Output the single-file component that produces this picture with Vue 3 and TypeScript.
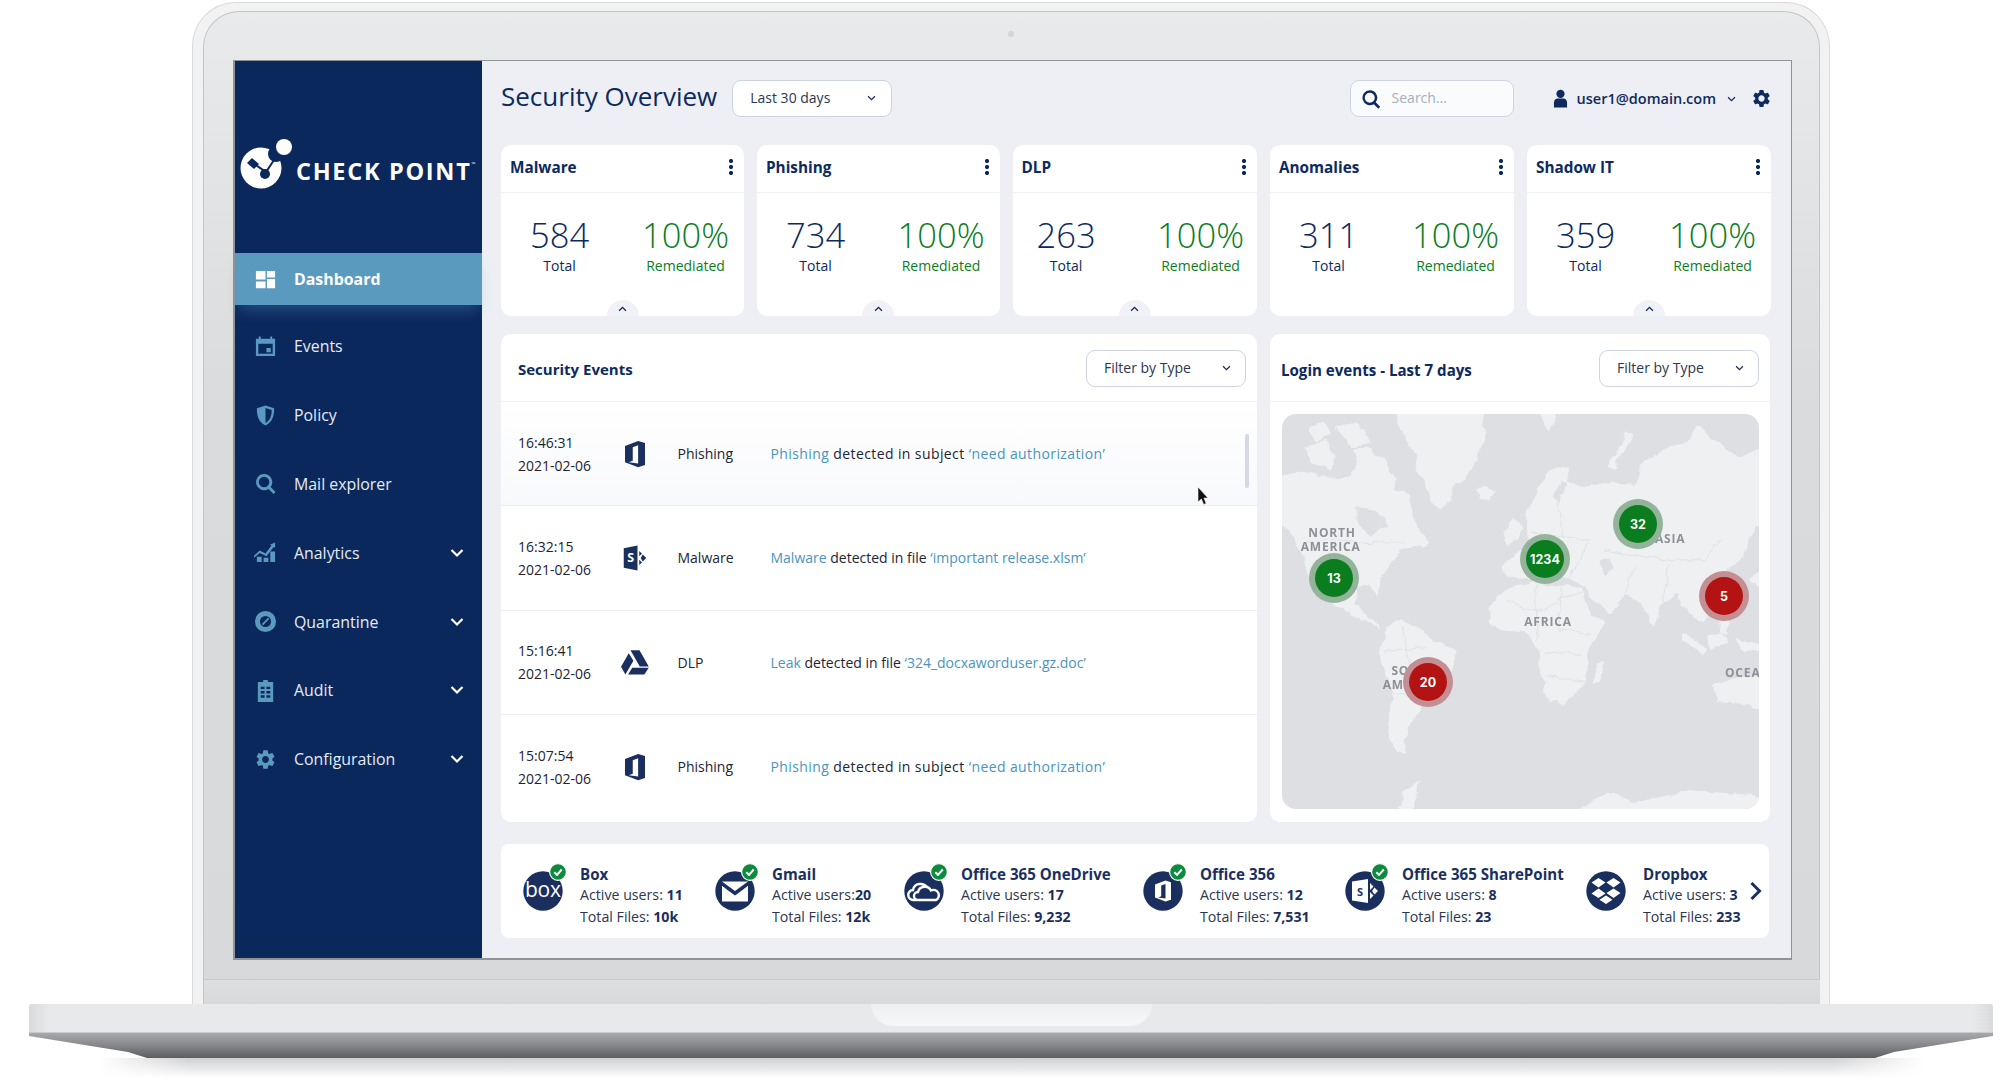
<script setup lang="ts">
interface NavItem {
  label: string
  icon: string
  caret?: boolean
  active?: boolean
}

const gear =
  'M19.14 12.94c.04-.3.06-.61.06-.94 0-.32-.02-.64-.07-.94l2.03-1.58a.49.49 0 0 0 .12-.61l-1.92-3.32a.488.488 0 0 0-.59-.22l-2.39.96c-.5-.38-1.03-.7-1.62-.94l-.36-2.54a.484.484 0 0 0-.48-.41h-3.84c-.24 0-.43.17-.47.41l-.36 2.54c-.59.24-1.13.57-1.62.94l-2.39-.96c-.22-.08-.47 0-.59.22L2.74 8.87c-.12.21-.08.47.12.61l2.03 1.58c-.05.3-.09.63-.09.94s.02.64.07.94l-2.03 1.58a.49.49 0 0 0-.12.61l1.92 3.32c.12.22.37.29.59.22l2.39-.96c.5.38 1.03.7 1.62.94l.36 2.54c.05.24.24.41.48.41h3.84c.24 0 .44-.17.47-.41l.36-2.54c.59-.24 1.13-.56 1.62-.94l2.39.96c.22.08.47 0 .59-.22l1.92-3.32c.12-.22.07-.47-.12-.61l-2.01-1.58zM12 15.6c-1.98 0-3.6-1.62-3.6-3.6s1.62-3.6 3.6-3.6 3.6 1.62 3.6 3.6-1.62 3.6-3.6 3.6z'
const office = 'M14.5 1.5 4 5.5v13l10.5 4 5.5-1.7V3.2zM14.5 5v14.6L7 18.6l3.2-1.3V6.6z'
const sharepoint =
  'M3 4.2 14 2v20L3 19.8zM15.4 6.4l2.2 2.1-2.2 2.1zM15.4 13.4l2.2 2.1-2.2 2.1zM18.2 9.2l2.8 2.8-2.8 2.8-1.6-2.8z'
const drive = 'M8.4 2.5h7.2L23 15.5h-7.2zM7 5 .8 15.8l3.5 6.1 6.4-10.9zM9.8 16.5H23l-3.5 5.4H6.4z'

const nav: NavItem[] = [
  { label: 'Dashboard', active: true, icon: 'M2 3h10v9H2zM13.5 3H22v7h-8.5zM2 14h10v7H2zM13.5 11.5H22V21h-8.5z' },
  { label: 'Events', icon: 'M5 1.5h2V4h10V1.5h2V4h3v18H2V4h3zM4.5 9v10.5h15V9zM13 13.5h4.5V18H13z' },
  { label: 'Policy', icon: 'M12 1.5 21 4.5c0 8-1.5 14-9 18-7.5-4-9-10-9-18zM12 4.3v15.6c5-3 6.4-7.5 6.5-13.6z' },
  { label: 'Mail explorer', icon: 'M10.5 2a8.5 8.5 0 0 1 6.8 13.6l5.2 5.2-2.1 2.1-5.2-5.2A8.5 8.5 0 1 1 10.5 2zm0 3a5.5 5.5 0 1 0 0 11 5.5 5.5 0 0 0 0-11z' },
  { label: 'Analytics', caret: true, icon: 'M0 15.5 6 10l6 3 6.2-8.2-1.6-.8L22 1.5V7l-1.5-.8-7.5 9.6-7-3.4-6 5.1zM3 16.5h5V22H3zM10 17.5h5V22h-5zM17 11h5v11h-5z' },
  { label: 'Quarantine', caret: true, icon: 'M12 1a11 11 0 1 1 0 22 11 11 0 0 1 0-22zm0 5.2a5.8 5.8 0 1 0 0 11.6 5.8 5.8 0 0 0 0-11.6zM14.6 8l1.3 1.3-6.4 6.6-1.3-1.3z' },
  { label: 'Audit', caret: true, icon: 'M9.5 1h5v2H20v21H4V3h5.5zM7 8v2.5h4V8zM13 8v2.5h4V8zM7 12.5V15h4v-2.5zM13 12.5V15h4v-2.5zM7 17v2.5h4V17zM13 17v2.5h4V17z' },
  { label: 'Configuration', caret: true, icon: gear },
]

const cards = [
  { title: 'Malware', total: 584, bubble: true },
  { title: 'Phishing', total: 734, bubble: true },
  { title: 'DLP', total: 263, bubble: true },
  { title: 'Anomalies', total: 311, bubble: false },
  { title: 'Shadow IT', total: 359, bubble: true },
]

const events = [
  { time: '16:46:31', icon: office, type: 'Phishing', lead: 'Phishing', mid: ' detected in subject ', file: '‘need authorization’', wide: true },
  { time: '16:32:15', icon: sharepoint, type: 'Malware', lead: 'Malware', mid: ' detected in file ', file: '‘important release.xlsm’', wide: false },
  { time: '15:16:41', icon: drive, type: 'DLP', lead: 'Leak', mid: ' detected in file ', file: '‘324_docxaworduser.gz.doc’', wide: false },
  { time: '15:07:54', icon: office, type: 'Phishing', lead: 'Phishing', mid: ' detected in subject ', file: '‘need authorization’', wide: true },
]

const pins = [
  { n: '13', x: 52, y: 164, red: false },
  { n: '1234', x: 263, y: 145, red: false },
  { n: '32', x: 356, y: 110, red: false },
  { n: '5', x: 442, y: 182, red: true },
  { n: '20', x: 146, y: 268, red: true },
]

const apps = [
  { name: 'Box', users: ' 11', files: '10k', kind: 'box', ok: true },
  { name: 'Gmail', users: '20', files: '12k', kind: 'gmail', ok: true },
  { name: 'Office 365 OneDrive', users: ' 17', files: '9,232', kind: 'onedrive', ok: true },
  { name: 'Office 356', users: ' 12', files: '7,531', kind: 'office', ok: true },
  { name: 'Office 365 SharePoint', users: ' 8', files: '23', kind: 'sharepoint', ok: true },
  { name: 'Dropbox', users: ' 3', files: '233', kind: 'dropbox', ok: false },
]
</script>

<template>
  <div class="page">
    <div class="lid">
      <div class="lid-inner">
        <span class="camera"></span>
        <div class="screen">
          <aside class="sidebar">
            <div class="logo">
              <svg class="logo-mark" viewBox="0 0 60 56" width="60" height="56" aria-hidden="true">
                <circle cx="24" cy="34" r="20.5" fill="#fff" />
                <circle cx="39" cy="20" r="8" fill="#0a285c" />
                <circle cx="47" cy="13" r="8" fill="#fff" />
                <path d="M15 24l7 6-5 5-7-6z" fill="#0a285c" />
                <path d="M16 29l13 9 8-12" fill="none" stroke="#0a285c" stroke-width="2" />
                <circle cx="28" cy="40" r="5" fill="#0a285c" />
              </svg>
              <span class="logo-text">CHECK POINT<sup>™</sup></span>
            </div>
            <nav class="nav">
              <div v-for="item in nav" :key="item.label" class="nav-item" :class="{ active: item.active }">
                <svg class="nav-icon" viewBox="0 0 24 24" aria-hidden="true"><path :d="item.icon" fill-rule="evenodd" /></svg>
                <span class="nav-label">{{ item.label }}</span>
                <svg v-if="item.caret" class="nav-caret" viewBox="0 0 14 10" aria-hidden="true"><path d="M1.5 2 7 7.5 12.5 2" /></svg>
              </div>
            </nav>
          </aside>

          <main class="main">
            <header class="top">
              <h1 class="title">Security Overview</h1>
              <div class="select range">
                <span>Last 30 days</span>
                <svg class="caret" viewBox="0 0 10 7" aria-hidden="true"><path d="M1 1.5 5 5.5 9 1.5" /></svg>
              </div>
              <div class="search">
                <svg viewBox="0 0 24 24" width="20" height="20" aria-hidden="true"><path fill="#0d2a5e" fill-rule="evenodd" d="M10.5 1.5a9 9 0 0 1 7.1 14.5l5.4 5.4-2.2 2.2-5.4-5.4A9 9 0 1 1 10.5 1.5zm0 3a6 6 0 1 0 0 12 6 6 0 0 0 0-12z" /></svg>
                <span>Search...</span>
              </div>
              <div class="user">
                <svg viewBox="0 0 16 20" width="15" height="19" aria-hidden="true"><circle cx="8" cy="5" r="4.4" fill="#0d2a5e" /><path fill="#0d2a5e" d="M1 19.5v-5c0-3 2-4.6 4-4.6h6c2 0 4 1.6 4 4.6v5z" /></svg>
                <span class="user-name">user1@domain.com</span>
                <svg class="caret" viewBox="0 0 10 7" aria-hidden="true"><path d="M1 1.5 5 5.5 9 1.5" /></svg>
                <svg class="top-gear" viewBox="0 0 24 24" width="21" height="21" aria-hidden="true"><path :d="gear" fill="#0d2a5e" /></svg>
              </div>
            </header>

            <section class="cards">
              <article v-for="card in cards" :key="card.title" class="card">
                <div class="card-head">
                  <span>{{ card.title }}</span>
                  <i class="dots"></i>
                </div>
                <div class="card-body">
                  <div class="stat">
                    <b>{{ card.total }}</b>
                    <small>Total</small>
                  </div>
                  <div class="stat good">
                    <b>100%</b>
                    <small>Remediated</small>
                  </div>
                </div>
                <div v-if="card.bubble" class="bubble">
                  <svg viewBox="0 0 10 7" width="9" height="6" aria-hidden="true"><path d="M1 5.5 5 1.5 9 5.5" /></svg>
                </div>
              </article>
            </section>

            <section class="panels">
              <div class="panel events">
                <div class="panel-head">
                  <h2>Security Events</h2>
                  <div class="select filter">
                    <span>Filter by Type</span>
                    <svg class="caret" viewBox="0 0 10 7" aria-hidden="true"><path d="M1 1.5 5 5.5 9 1.5" /></svg>
                  </div>
                </div>
                <div v-for="(ev, i) in events" :key="ev.time" class="event" :class="{ first: i === 0 }">
                  <div class="when">{{ ev.time }}<br />2021-02-06</div>
                  <div class="event-icon">
                    <svg viewBox="0 0 24 24" width="30" height="30" aria-hidden="true"><path :d="ev.icon" fill="#1b2f5e" fill-rule="evenodd" /><text v-if="ev.type === 'Malware'" x="8.5" y="15.5" font-size="10" font-weight="700" fill="#fff" text-anchor="middle" font-family="Open Sans">S</text></svg>
                  </div>
                  <div class="event-type">{{ ev.type }}</div>
                  <div class="event-msg" :class="{ wide: ev.wide }"><span class="link">{{ ev.lead }}</span>{{ ev.mid }}<span class="link">{{ ev.file }}</span></div>
                </div>
                <span class="scrollbar"></span>
                <svg class="cursor" viewBox="0 0 12 20" width="12" height="20" aria-hidden="true"><path d="M1 0v15l3.4-3 2.2 5.5 2.6-1-2.2-5.4H11z" fill="#111" stroke="#fff" stroke-width=".6" /></svg>
              </div>

              <div class="panel login">
                <div class="panel-head">
                  <h2>Login events - Last 7 days</h2>
                  <div class="select filter">
                    <span>Filter by Type</span>
                    <svg class="caret" viewBox="0 0 10 7" aria-hidden="true"><path d="M1 1.5 5 5.5 9 1.5" /></svg>
                  </div>
                </div>
                <div class="map">
                  <svg class="map-art" viewBox="36 43 1430 1184" aria-hidden="true">
                    <defs>
                      <filter id="rough" x="-5%" y="-5%" width="110%" height="110%">
                        <feTurbulence type="fractalNoise" baseFrequency="0.022" numOctaves="4" seed="7" />
                        <feDisplacementMap in="SourceGraphic" scale="26" xChannelSelector="R" yChannelSelector="G" />
                      </filter>
                    </defs>
                    <g filter="url(#rough)">
                      <g fill="#eff0f2" stroke="#eff0f2" stroke-width="4" stroke-linejoin="round">
                        <path d="M370 30H640L640 120 615 185 575 245 545 270 520 335 490 310 480 270 445 215 435 160 400 100z" />
                        <path d="M20 232 100 218 170 232 240 235 270 195 255 150 300 150 340 200 375 270 415 285 425 340 455 400 470 435 420 445 385 450 355 500 330 535 325 585 300 555 265 565 245 610 275 635 330 680 300 668 255 650 215 625 170 590 130 555 105 480 62 395 20 345z" />
                        <path d="M105 145l60-20 30 40-20 45-50-20zM120 90l40-20 20 30-40 25zM200 80l60-10 40 60-50 10zM290 165l50 10 35 70-30 15-30-40z" />
                        <path d="M620 270l30-8 22 15-18 20-30-5z" />
                        <path d="M1020 200l50-100 20 8-50 60-5 40z" />
                        <path d="M345 685 395 665 450 690 490 725 560 752 550 800 510 870 450 925 415 975 400 1060 365 1035 355 960 372 880 328 760z" />
                        <path d="M770 345 800 265 860 205 895 205 880 250 950 265 1020 250 1100 255 1115 190 1250 125 1280 80 1330 125 1400 170 1480 150V365L1435 410 1415 470 1370 505 1335 590 1300 665 1255 640 1220 580 1175 610 1150 680 1115 610 1065 585 1025 640 960 590 925 545 875 530 800 540 720 530 695 500 730 470 790 440 770 400z" />
                        <path d="M700 400l30-45 20 30-6 40-30 5z" />
                        <path d="M660 625 700 565 790 550 880 565 925 565 965 650 1000 670 950 760 945 840 885 905 835 905 815 830 810 750 770 695 690 690 660 660z" />
                        <path d="M975 800l22-12-10 55-15 10z" />
                        <path d="M1240 700l70 50-10 10-60-35zM1310 710l50-10 5 30-45 15zM1400 720l80 20v20l-74-15zM1440 540l40-30 0 60zM1350 650l25 5-5 45-15-10z" />
                        <path d="M1330 860 1390 832 1480 840V935L1430 910 1340 905z" />
                        <path d="M380 1240 405 1170 445 1148 420 1240zM910 1240 1020 1178 1100 1212 1250 1172 1480 1190V1240z" />
                        <path d="M805 30h55l-25 63z" />
                      </g>
                      <g fill="#dedfe3">
                        <path d="M262 322l60 10 30 45-50 30-40-45z" />
                        <path d="M850 290l20-50 12 10-12 60zM985 480l35-8 10 40-25 10z" />
                      </g>
                      <g fill="none" stroke="#dddee2" stroke-width="2.5">
                        <path d="M105 420 350 430 400 430M705 600 800 640 870 600 930 580M800 550 800 720M870 565 870 690 960 700M820 760 930 760M820 830 945 840M1000 450 1180 480 1300 480 1350 420M1065 585 1100 500M1175 610 1200 490M340 760 470 740M400 680 420 830 510 840M370 880 440 890M780 400 960 420 900 530M860 300 880 420" />
                      </g>
                    </g>
                    <g class="map-labels">
                      <text x="115" y="411">NORTH</text>
                      <text x="92" y="454">AMERICA</text>
                      <text x="762" y="678">AFRICA</text>
                      <text x="1154" y="431">ASIA</text>
                      <text x="364" y="824">SO</text>
                      <text x="338" y="867">AM</text>
                      <text x="1364" y="831">OCEA</text>
                    </g>
                  </svg>
                  <span
                    v-for="pin in pins"
                    :key="pin.n"
                    class="pin"
                    :class="{ red: pin.red }"
                    :style="{ left: pin.x + 'px', top: pin.y + 'px' }"
                  >{{ pin.n }}</span>
                </div>
              </div>
            </section>

            <section class="apps">
              <div v-for="app in apps" :key="app.name" class="app">
                <div class="app-icon">
                  <svg viewBox="0 0 40 40" width="40" height="40" aria-hidden="true">
                    <circle cx="20" cy="20" r="19.7" fill="#1b2f5e" />
                    <text v-if="app.kind === 'box'" x="20" y="26" font-size="21" fill="#fff" text-anchor="middle" font-family="Open Sans" textLength="36">box</text>
                    <g v-else-if="app.kind === 'gmail'">
                      <path d="M7 10.5h26v20H7z" fill="#fff" />
                      <path d="M7 10.5 20 20l13-9.5v4.5L20 24.5 7 15z" fill="#1b2f5e" />
                      <path d="M11 18v12H7V15zM29 18v12h4V15z" fill="#fff" />
                    </g>
                    <g v-else-if="app.kind === 'onedrive'" fill="none" stroke="#fff" stroke-width="2.4">
                      <path d="M13 29H9.5a5 5 0 0 1-.5-10 6.5 6.5 0 0 1 7-6 8 8 0 0 1 7 3" />
                      <path d="M14 29a4 4 0 0 1 0-8 7 7 0 0 1 13-1.5A5 5 0 0 1 32 29z" fill="#1b2f5e" />
                    </g>
                    <path v-else-if="app.kind === 'office'" transform="translate(8 8)" :d="office" fill="#fff" fill-rule="evenodd" />
                    <g v-else-if="app.kind === 'sharepoint'">
                      <path d="M7 10.5 23 8v24L7 29.5zM25 12l3.5 3.5L25 19zM25 21l3.5 3.5L25 28zM29.5 16.5l3.5 3.5-3.5 3.5-2.5-3.5z" fill="#fff" fill-rule="evenodd" />
                      <text x="15" y="24.5" font-size="11" font-weight="700" fill="#1b2f5e" text-anchor="middle" font-family="Open Sans">S</text>
                    </g>
                    <path v-else d="M12.5 7l7 4.5-7 5-7-5zM27.5 7l7 4.5-7 5-7-5zM12.5 17.5l7 5-7 4.5-7-4.5zM27.5 17.5l7 4.5-7 5-7-5zM20 24.5l6.5 4.2-6.5 4.3-6.5-4.3z" fill="#fff" />
                  </svg>
                  <svg v-if="app.ok" class="check" viewBox="0 0 18 18" width="18" height="18" aria-hidden="true">
                    <circle cx="9" cy="9" r="8.4" fill="#0e8a3e" stroke="#fff" stroke-width="1.2" />
                    <path d="M5.3 9.2 8 11.8 12.8 6.5" fill="none" stroke="#fff" stroke-width="2" />
                  </svg>
                </div>
                <div class="app-text">
                  <strong>{{ app.name }}</strong>
                  <span>Active users:<b>{{ app.users }}</b></span>
                  <span>Total Files: <b>{{ app.files }}</b></span>
                </div>
              </div>
              <svg class="apps-next" viewBox="0 0 12 20" width="13" height="20" aria-hidden="true"><path d="M2 2l8 8-8 8" /></svg>
            </section>
          </main>
        </div>
        <div class="chin"></div>
      </div>
    </div>
    <div class="base">
      <div class="base-top"><span class="notch"></span></div>
      <div class="base-edge"></div>
      <div class="base-shadow"></div>
    </div>
  </div>
</template>

<style>
html,
body {
  margin: 0;
  background: #fff;
  overflow: hidden;
}
</style>

<style scoped>
* {
  box-sizing: border-box;
}

.page {
  width: 2000px;
  height: 1080px;
  padding-top: 2px;
  font-family: 'Open Sans', 'Liberation Sans', sans-serif;
  color: #0d2a5e;
  overflow: hidden;
}

.lid {
  width: 1638px;
  height: 1002px;
  margin-left: 192px;
  padding: 8px 9px 0 10px;
  border: 1px solid #d9dadc;
  border-bottom: 0;
  border-radius: 44px 44px 0 0;
  background: #f2f2f3;
}

.lid-inner {
  position: relative;
  height: 100%;
  padding: 48px 0 0 29px;
  border: 1px solid #c3c4c7;
  border-bottom: 0;
  border-radius: 36px 36px 0 0;
  background: linear-gradient(#e9eaeb, #dadbdc 40%, #d8d9db);
}

.camera {
  position: absolute;
  top: 19px;
  left: 804px;
  width: 6px;
  height: 6px;
  border-radius: 50%;
  background: #d4d5d8;
}

.screen {
  display: flex;
  width: 1559px;
  height: 900px;
  border: 2px solid #8f9296;
  border-width: 1px 1px 2px 2px;
  background: #edeff5;
}

.chin {
  height: 25px;
  margin: 19px -1px 0 -29px;
  border-top: 1px solid #c8c9cb;
  background: linear-gradient(#dedfe1, #d8d9db);
}

.sidebar {
  flex: none;
  width: 247px;
  background: #0a285c;
}

.logo {
  display: flex;
  align-items: flex-end;
  height: 192px;
  padding: 0 0 49px 1px;
  color: #fff;
}

.logo-mark {
  flex: none;
  margin: 0 -1px 14px 1px;
}

.logo-text {
  margin-bottom: 19px;
  font-size: 23.5px;
  line-height: 28px;
  font-weight: 700;
  letter-spacing: 1.7px;
  white-space: nowrap;
}

.logo-text sup {
  font-size: 5px;
  font-weight: 400;
  vertical-align: 14px;
  line-height: 0;
}

.nav-item {
  display: flex;
  align-items: center;
  height: 68.8px;
  padding-left: 19px;
  color: #e6ebf3;
}

.nav-item.active {
  height: 52px;
  margin-bottom: 7px;
  color: #fff;
  background: #5b9abf;
  font-weight: 700;
  box-shadow: 0 10px 14px -4px rgba(91, 154, 191, 0.3);
}

.nav-icon {
  flex: none;
  width: 23px;
  height: 23px;
  fill: #5b9abf;
}

.active .nav-icon {
  fill: #fff;
}

.nav-label {
  margin-left: 17px;
  font-size: 15.9px;
}

.nav-caret {
  width: 14px;
  height: 10px;
  margin-left: auto;
  margin-right: 18px;
  fill: none;
  stroke: #fff;
  stroke-width: 2.2;
}

.main {
  flex: 1;
  min-width: 0;
  padding: 19px 19px 0;
}

.top {
  display: flex;
  align-items: center;
  height: 37px;
  margin-bottom: 28px;
}

.title {
  margin: 0 15px 4px 0;
  font-size: 26px;
  line-height: 37px;
  font-weight: 400;
  white-space: nowrap;
}

.select {
  display: flex;
  align-items: center;
  justify-content: space-between;
  height: 37px;
  padding-bottom: 2px;
  border: 1px solid #ccd3e2;
  border-radius: 9px;
  background: #fff;
  font-size: 14px;
  color: #2b3650;
}

.caret {
  flex: none;
  width: 9px;
  height: 6px;
  fill: none;
  stroke: #1d2f58;
  stroke-width: 1.5;
}

.range {
  width: 160px;
  padding-left: 17px;
  padding-right: 15px;
}

.search {
  display: flex;
  align-items: center;
  gap: 11px;
  width: 164px;
  height: 37px;
  margin-left: auto;
  padding-left: 10px;
  border: 1px solid #ccd3e2;
  border-radius: 9px;
  background: #fafbfd;
  color: #a7aebb;
  font-size: 14px;
}

.search span {
  margin-bottom: 2px;
}

.user {
  display: flex;
  align-items: center;
  margin-left: 39px;
}

.user-name {
  margin: 0 11px 0 9px;
  font-size: 14.5px;
  font-weight: 600;
  white-space: nowrap;
}

.top-gear {
  margin-left: 15px;
}

.cards {
  display: grid;
  grid-template-columns: 243px 242.5px 244.5px 244px 244px;
  gap: 13px;
  height: 171px;
  margin-bottom: 18px;
}

.card {
  position: relative;
  overflow: hidden;
  border-radius: 10px;
  background: #fff;
}

.card-head {
  display: flex;
  align-items: center;
  justify-content: space-between;
  height: 48px;
  padding: 0 11px 3px 9px;
  border-bottom: 1px solid #eff1f7;
  font-size: 15.3px;
  font-weight: 700;
}

.dots {
  width: 4px;
  height: 16px;
  background: radial-gradient(circle at 2px 2px, #0d2a5e 2px, transparent 2.2px) 0 0 / 4px 6px;
}

.card-body {
  display: flex;
  justify-content: space-between;
  padding: 24px 15px 0 29px;
}

.card:nth-child(3) .card-body {
  padding-left: 24px;
  padding-right: 13px;
}

.stat {
  display: flex;
  flex-direction: column;
  align-items: center;
}

.stat b {
  font-size: 34.5px;
  line-height: 36px;
  font-weight: 350;
}

.stat small {
  font-size: 14px;
  line-height: 26px;
}

.good {
  color: #0a7d1e;
}

.bubble {
  position: absolute;
  left: 50%;
  bottom: -16px;
  display: flex;
  justify-content: center;
  width: 32px;
  height: 32px;
  margin-left: -16px;
  padding-top: 6px;
  border-radius: 50%;
  background: #f0f2f7;
}

.bubble svg {
  fill: none;
  stroke: #0d2a5e;
  stroke-width: 1.5;
}

.panels {
  display: grid;
  grid-template-columns: 756px 500px;
  gap: 13px;
  height: 488px;
  margin-bottom: 22px;
}

.panel {
  position: relative;
  overflow: hidden;
  border-radius: 10px;
  background: #fff;
}

.panel-head {
  display: flex;
  align-items: center;
  justify-content: space-between;
  height: 68px;
  padding: 0 11px 0 17px;
  border-bottom: 1px solid #eff1f7;
}

.panel-head h2 {
  margin: 2px 0 0;
  font-size: 15px;
  font-weight: 700;
}

.filter {
  width: 160px;
  padding-left: 17px;
  padding-right: 14px;
  margin-top: 2px;
}

.login .panel-head {
  padding-left: 11px;
}

.login .panel-head h2 {
  margin-top: 4px;
  font-size: 15.1px;
}

.event {
  display: flex;
  align-items: center;
  height: 104.25px;
  padding-left: 17px;
  border-bottom: 1px solid #eceef3;
  font-size: 14px;
  color: #1d2433;
}

.event:last-of-type {
  border-bottom: 0;
}

.event.first {
  background: linear-gradient(#fff, #f8f9fc);
}

.when {
  width: 105.5px;
  line-height: 23px;
}

.event-icon {
  display: flex;
  width: 54px;
}

.event-icon svg {
  margin-left: -4px;
}

.event-type {
  width: 93px;
}

.wide {
  letter-spacing: 0.4px;
}

.link {
  color: #4a94bd;
}

.scrollbar {
  position: absolute;
  top: 100px;
  left: 744px;
  width: 4px;
  height: 54px;
  border-radius: 2px;
  background: #d5d9e6;
}

.cursor {
  position: absolute;
  top: 153px;
  left: 696px;
}

.map {
  position: relative;
  height: 395px;
  margin: 12px 11px 0 12px;
  overflow: hidden;
  border-radius: 14px;
  background: #dedfe3;
}

.map-art {
  display: block;
  width: 100%;
  height: 100%;
  filter: blur(0.4px);
}

.map-labels text {
  font-family: 'Open Sans', sans-serif;
  font-size: 36px;
  font-weight: 700;
  letter-spacing: 2.5px;
  fill: #8e9097;
}

.pin {
  position: absolute;
  display: flex;
  align-items: center;
  justify-content: center;
  width: 38px;
  height: 38px;
  margin: -19px 0 0 -19px;
  border-radius: 50%;
  background: #0a7d1e;
  box-shadow: 0 0 0 6px #93b39a;
  color: #fff;
  font-family: Inter, sans-serif;
  font-size: 12.5px;
  font-weight: 700;
}

.pin.red {
  background: #b31313;
  box-shadow: 0 0 0 6px #c48f93;
}

.apps {
  position: relative;
  display: grid;
  grid-template-columns: 192px 189px 239px 202px 241px 1fr;
  align-items: center;
  width: 1268px;
  height: 94px;
  padding-left: 22px;
  border-radius: 8px;
  background: #fff;
}

.app {
  display: flex;
  align-items: center;
  gap: 17px;
  color: #1b2f5e;
}

.app-icon {
  position: relative;
  flex: none;
  display: flex;
}

.check {
  position: absolute;
  top: -8px;
  right: -4px;
}

.app-text {
  display: flex;
  flex-direction: column;
  margin-top: 8px;
  font-size: 14.2px;
  line-height: 22px;
  color: #2b3650;
  white-space: nowrap;
}

.app-text strong {
  margin-bottom: -2px;
  font-size: 15.1px;
  line-height: 23px;
  font-weight: 700;
  color: #1b2f5e;
}

.app-text b {
  font-weight: 700;
  color: #1b2f5e;
}

.apps-next {
  position: absolute;
  top: 37px;
  right: 7px;
  fill: none;
  stroke: #1b2f5e;
  stroke-width: 3;
}

.base {
  width: 1964px;
  margin-left: 29px;
}

.base-top {
  height: 29px;
  border-radius: 2px 2px 0 0;
  border-bottom: 1px solid #c9cacc;
  background: linear-gradient(90deg, #d9dadc, #e8e9ea 20px, #e8e9ea calc(100% - 20px), #d9dadc);
}

.notch {
  display: block;
  width: 281px;
  height: 22px;
  margin: 0 auto;
  border-radius: 0 0 22px 22px;
  background: linear-gradient(#eeeff1, #f6f7f8);
}

.base-edge {
  height: 25px;
  background: linear-gradient(#a7a8ab, #8d8e91 40%, #5d5e61);
  clip-path: polygon(0 0, 100% 0, 100% 3px, calc(100% - 99px) 19px, calc(100% - 118px) 25px, 118px 25px, 99px 19px, 0 3px);
}

.base-shadow {
  height: 20px;
  margin: 0 70px;
  background: linear-gradient(#cfd0d2, #fff);
  -webkit-mask-image: linear-gradient(90deg, transparent, #000 90px, #000 calc(100% - 90px), transparent);
  mask-image: linear-gradient(90deg, transparent, #000 90px, #000 calc(100% - 90px), transparent);
}
</style>
